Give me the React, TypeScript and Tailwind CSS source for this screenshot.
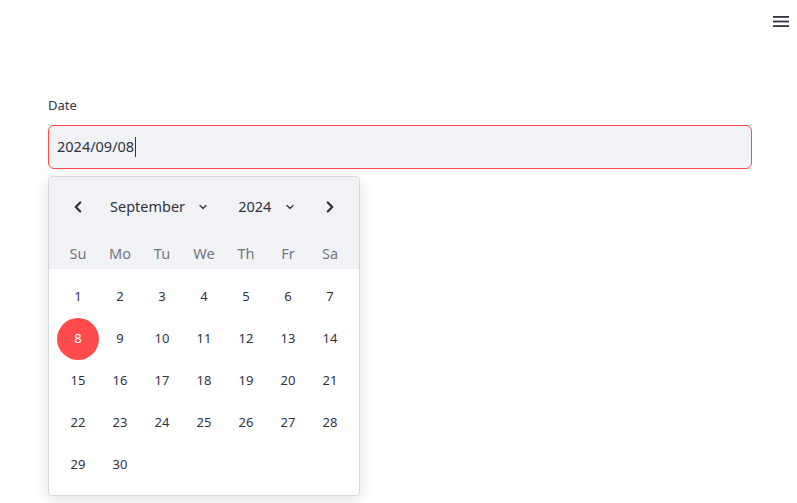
import { ChevronLeft, ChevronRight, ChevronDown } from "lucide-react";

const weekdays = ["Su", "Mo", "Tu", "We", "Th", "Fr", "Sa"];

// September 2024 starts on a Sunday
const weeks: (number | null)[][] = [
  [1, 2, 3, 4, 5, 6, 7],
  [8, 9, 10, 11, 12, 13, 14],
  [15, 16, 17, 18, 19, 20, 21],
  [22, 23, 24, 25, 26, 27, 28],
  [29, 30, null, null, null, null, null],
];

const selected = 8;

export default function App() {
  return (
    <div
      className="relative h-[503px] w-full bg-white text-[#31333f]"
      style={{ fontFamily: '"Noto Sans", "Open Sans", sans-serif' }}
    >
      {/* Top right menu */}
      <div className="flex justify-end pr-[8px] pt-[16px]">
        <svg width="16" height="11" viewBox="0 0 16 11" className="text-[#31333f]">
          <rect x="0" y="0" width="16" height="1.8" fill="currentColor" />
          <rect x="0" y="4.6" width="16" height="1.8" fill="currentColor" />
          <rect x="0" y="9.2" width="16" height="1.8" fill="currentColor" />
        </svg>
      </div>

      <div className="pl-[48px] pr-[45px] pt-[69px]">
        {/* Label */}
        <div className="text-[13px] leading-[18px]">Date</div>

        {/* Input */}
        <div className="mt-[11px] flex h-[44px] items-center rounded-[6px] border border-[#ff4b4b] bg-[#f0f2f6] pl-[8px] text-[14.5px]">
          <span>2024/09/08</span>
          <span className="ml-[1px] h-[20px] w-[1px] bg-[#31333f]" />
        </div>

        {/* Calendar popup */}
        <div className="mt-[7px] w-[312px] overflow-hidden rounded-[4px] border border-[#d6d7db] bg-white shadow-[0_4px_16px_rgba(0,0,0,0.12)]">
          <div className="bg-[#f0f2f6] pt-[9px]">
            <div className="flex h-[42px] items-center px-[8px] text-[14.5px]">
              <div className="flex w-[42px] justify-center">
                <ChevronLeft size={18} strokeWidth={3} />
              </div>
              <div className="ml-[11px] flex items-center">
                <span>September</span>
                <ChevronDown size={12} strokeWidth={2.5} className="ml-[12px]" />
              </div>
              <div className="ml-[29px] flex items-center">
                <span>2024</span>
                <ChevronDown size={12} strokeWidth={2.5} className="ml-[13px]" />
              </div>
              <div className="ml-auto flex w-[42px] justify-center">
                <ChevronRight size={18} strokeWidth={3} />
              </div>
            </div>
            <div className="mt-[11px] grid h-[30px] grid-cols-7 items-center px-[8px] text-[14.5px] text-[#737682]">
              {weekdays.map((d) => (
                <div key={d} className="text-center">
                  {d}
                </div>
              ))}
            </div>
          </div>

          <div className="px-[8px] pb-[9px] pt-[7px]">
            {weeks.map((week, i) => (
              <div key={i} className="grid grid-cols-7">
                {week.map((day, j) => (
                  <div key={j} className="flex h-[42px] items-center justify-center">
                    {day !== null &&
                      (day === selected ? (
                        <div className="flex h-[42px] w-[42px] items-center justify-center rounded-full bg-[#ff4b4b] text-[13px] text-white">
                          {day}
                        </div>
                      ) : (
                        <span className="text-[13px]">{day}</span>
                      ))}
                  </div>
                ))}
              </div>
            ))}
          </div>
        </div>
      </div>
    </div>
  );
}
